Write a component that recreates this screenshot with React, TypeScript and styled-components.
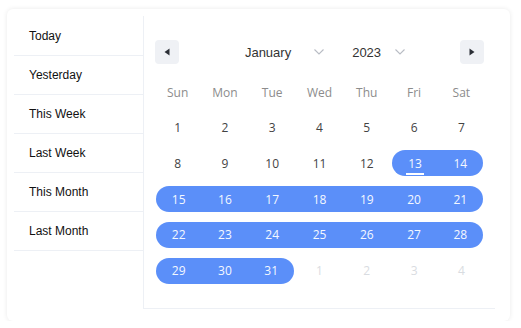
import React from "react";
import styled, { createGlobalStyle } from "styled-components";

const Global = createGlobalStyle`
  html, body { margin: 0; padding: 0; background: #fff; }
  body { font-family: "Liberation Sans", Arial, sans-serif; }
`;

const Card = styled.div`
  box-sizing: border-box;
  margin: 9px 0 0 7px;
  width: 503px;
  height: 312px;
  padding: 7px 15px 12px 7px;
  background: #fff;
  border-radius: 6px;
  box-shadow: 0 0 5px rgba(0, 0, 0, 0.09);
  display: flex;
  align-items: stretch;
`;

const Sidebar = styled.ul`
  list-style: none;
  margin: 0;
  padding: 1px 0 0 0;
  width: 129px;
  border-right: 1px solid #edf0f5;
  flex-shrink: 0;
`;

const PresetItem = styled.li`
  height: 38px;
  border-bottom: 1px solid #edf0f5;
  padding-left: 15px;
  display: flex;
  align-items: center;
  font-family: "Liberation Sans", Arial, sans-serif;
  font-size: 12px;
  color: #111;
`;

const Panel = styled.div`
  flex: 1;
  box-sizing: border-box;
  padding: 24px 10px 18px 10px;
  border-bottom: 1px solid #edf0f5;
  display: flex;
  flex-direction: column;
`;

const Header = styled.div`
  display: flex;
  align-items: center;
  height: 24px;
  padding: 0 1px;
`;

const NavButton = styled.button`
  width: 24px;
  height: 24px;
  border: none;
  border-radius: 4px;
  background: #eff1f5;
  display: flex;
  align-items: center;
  justify-content: center;
  padding: 0;
  flex-shrink: 0;
`;

const Selects = styled.div`
  flex: 1;
  display: flex;
  justify-content: center;
  align-items: center;
  gap: 28px;
  padding-left: 11px;
`;

const Select = styled.div<{ $gap: number }>`
  display: flex;
  align-items: center;
  gap: ${(p) => p.$gap}px;
  font-family: "Liberation Sans", Arial, sans-serif;
  font-size: 13px;
  color: #333;
`;

const Grid = styled.div`
  display: grid;
  grid-template-columns: repeat(7, 1fr);
`;

const WeekRow = styled(Grid)`
  margin-top: 11px;
`;

const WeekDay = styled.div`
  height: 34.5px;
  display: flex;
  align-items: center;
  justify-content: center;
  font-family: "Open Sans", sans-serif;
  font-size: 12px;
  color: #8c8c8c;
`;

const DayCell = styled.div<{
  $muted?: boolean;
  $inRange?: boolean;
  $start?: boolean;
  $end?: boolean;
}>`
  height: 26px;
  margin: 5px ${(p) => (p.$end ? 2 : 0)}px 4.75px ${(p) => (p.$start ? 2 : 0)}px;
  display: flex;
  align-items: center;
  justify-content: center;
  font-family: "Open Sans", sans-serif;
  font-size: 12px;
  color: ${(p) => (p.$inRange ? "#f4f8ff" : p.$muted ? "#d9dce1" : "#434343")};
  background: ${(p) => (p.$inRange ? "#5b8ff9" : "transparent")};
  border-radius: ${(p) =>
    `${p.$start ? 13 : 0}px ${p.$end ? 13 : 0}px ${p.$end ? 13 : 0}px ${p.$start ? 13 : 0}px`};
  position: relative;
`;

const TodayMark = styled.span`
  position: relative;
  &::after {
    content: "";
    position: absolute;
    left: -2px;
    right: -2px;
    bottom: -3px;
    height: 2px;
    background: #fff;
  }
`;

const Triangle = ({ dir }: { dir: "left" | "right" }) => (
  <svg width="6" height="8" viewBox="0 0 6 8">
    {dir === "left" ? (
      <path d="M5.5 0.5 L0.5 4 L5.5 7.5 Z" fill="#2b2f36" />
    ) : (
      <path d="M0.5 0.5 L5.5 4 L0.5 7.5 Z" fill="#2b2f36" />
    )}
  </svg>
);

const Chevron = () => (
  <svg width="10" height="6" viewBox="0 0 10 6">
    <path d="M0.5 0.5 L5 5 L9.5 0.5" fill="none" stroke="#b8bcc4" strokeWidth="1.1" />
  </svg>
);

const presets = ["Today", "Yesterday", "This Week", "Last Week", "This Month", "Last Month"];
const weekdays = ["Sun", "Mon", "Tue", "Wed", "Thu", "Fri", "Sat"];

type Day = { n: number; muted?: boolean };
const days: Day[] = [];
for (let i = 1; i <= 31; i++) days.push({ n: i });
for (let i = 1; i <= 4; i++) days.push({ n: i, muted: true });
const weeks: Day[][] = [];
for (let i = 0; i < days.length; i += 7) weeks.push(days.slice(i, i + 7));

const inRange = (d: Day) => !d.muted && d.n >= 13 && d.n <= 31;

export default function App() {
  return (
    <>
      <Global />
      <Card>
        <Sidebar>
          {presets.map((p) => (
            <PresetItem key={p}>{p}</PresetItem>
          ))}
        </Sidebar>
        <Panel>
          <Header>
            <NavButton>
              <Triangle dir="left" />
            </NavButton>
            <Selects>
              <Select $gap={23}>
                <span>January</span>
                <Chevron />
              </Select>
              <Select $gap={14}>
                <span>2023</span>
                <Chevron />
              </Select>
            </Selects>
            <NavButton>
              <Triangle dir="right" />
            </NavButton>
          </Header>
          <WeekRow>
            {weekdays.map((w) => (
              <WeekDay key={w}>{w}</WeekDay>
            ))}
          </WeekRow>
          {weeks.map((week, wi) => (
            <Grid key={wi}>
              {week.map((d, di) => {
                const r = inRange(d);
                const prev = di > 0 && inRange(week[di - 1]);
                const next = di < 6 && inRange(week[di + 1]);
                return (
                  <DayCell
                    key={di}
                    $muted={d.muted}
                    $inRange={r}
                    $start={r && !prev}
                    $end={r && !next}
                  >
                    {!d.muted && d.n === 13 ? <TodayMark>{d.n}</TodayMark> : d.n}
                  </DayCell>
                );
              })}
            </Grid>
          ))}
        </Panel>
      </Card>
    </>
  );
}
